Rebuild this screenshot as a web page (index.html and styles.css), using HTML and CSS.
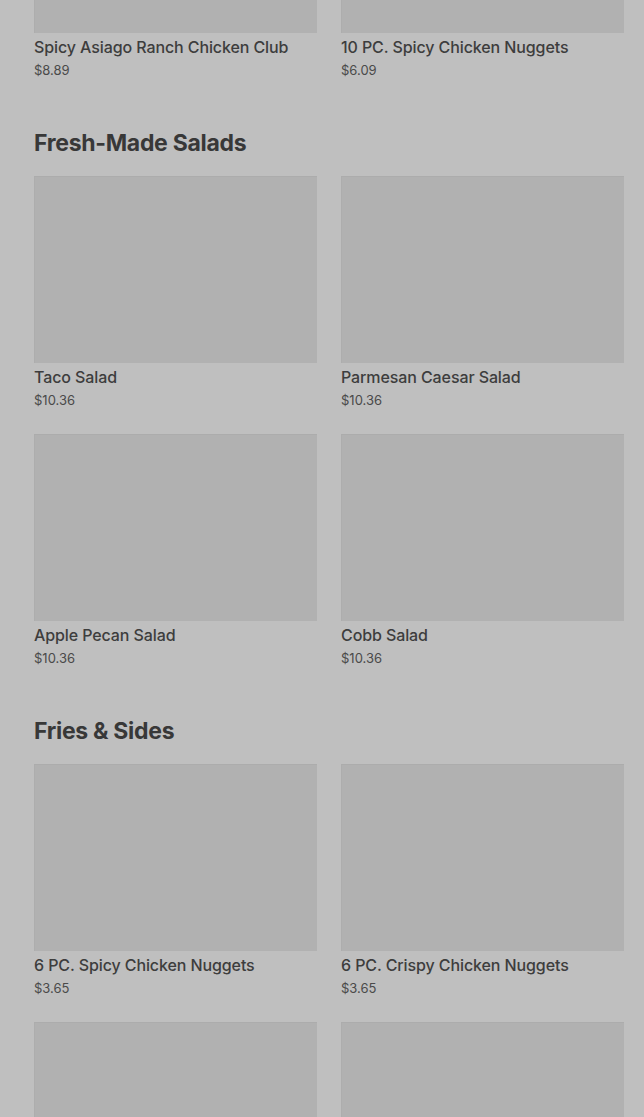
FILE: index.html
```html
<!DOCTYPE html>
<html lang="en">
<head>
    <meta charset="UTF-8">
    <meta name="viewport" content="width=device-width, initial-scale=1.0">
    <title>Menu</title>
    <link rel="stylesheet" href="styles.css">
</head>
<body>
    <main class="menu">
        <section class="menu-section">
            <div class="item-grid">
                <div class="item">
                    <div class="item-image"></div>
                    <h3 class="item-name">Spicy Asiago Ranch Chicken Club</h3>
                    <p class="item-price">$8.89</p>
                </div>
                <div class="item">
                    <div class="item-image"></div>
                    <h3 class="item-name">10 PC. Spicy Chicken Nuggets</h3>
                    <p class="item-price">$6.09</p>
                </div>
            </div>
        </section>

        <section class="menu-section">
            <h2 class="section-title">Fresh-Made Salads</h2>
            <div class="item-grid">
                <div class="item">
                    <div class="item-image"></div>
                    <h3 class="item-name">Taco Salad</h3>
                    <p class="item-price">$10.36</p>
                </div>
                <div class="item">
                    <div class="item-image"></div>
                    <h3 class="item-name">Parmesan Caesar Salad</h3>
                    <p class="item-price">$10.36</p>
                </div>
                <div class="item">
                    <div class="item-image"></div>
                    <h3 class="item-name">Apple Pecan Salad</h3>
                    <p class="item-price">$10.36</p>
                </div>
                <div class="item">
                    <div class="item-image"></div>
                    <h3 class="item-name">Cobb Salad</h3>
                    <p class="item-price">$10.36</p>
                </div>
            </div>
        </section>

        <section class="menu-section">
            <h2 class="section-title">Fries &amp; Sides</h2>
            <div class="item-grid">
                <div class="item">
                    <div class="item-image"></div>
                    <h3 class="item-name">6 PC. Spicy Chicken Nuggets</h3>
                    <p class="item-price">$3.65</p>
                </div>
                <div class="item">
                    <div class="item-image"></div>
                    <h3 class="item-name">6 PC. Crispy Chicken Nuggets</h3>
                    <p class="item-price">$3.65</p>
                </div>
                <div class="item">
                    <div class="item-image"></div>
                </div>
                <div class="item">
                    <div class="item-image"></div>
                </div>
            </div>
        </section>
    </main>
</body>
</html>
```

FILE: styles.css
```css
html,
body {
    margin: 0;
    background-color: #bfbfbf;
    overflow: hidden;
}

body {
    height: 1117px;
    font-family: Inter, "Noto Sans", sans-serif;
    color: #3b3b3b;
}

/* page is scrolled part-way down the menu */
.menu {
    margin-top: -154px;
    padding: 0 20px 0 34px;
}

.menu-section {
    margin-bottom: 48px;
}

.section-title {
    margin: 0 0 19px;
    font-size: 23px;
    line-height: 28px;
    font-weight: 700;
    letter-spacing: -0.3px;
    color: #383838;
}

.item-grid {
    display: grid;
    grid-template-columns: 1fr 1fr;
    column-gap: 24px;
    row-gap: 23px;
}

.item-image {
    height: 187px;
    background-color: #b1b1b1;
    box-shadow: inset 0 1px 0 #acacac, inset 1px 0 0 #adadad;
}

.item-name {
    margin: 2px 0 0;
    font-size: 16px;
    line-height: 24px;
    font-weight: 500;
    letter-spacing: -0.1px;
    color: #3d3d3d;
}

.item-price {
    margin: 0;
    font-size: 13px;
    line-height: 22px;
    color: #4a4a4a;
}
```
